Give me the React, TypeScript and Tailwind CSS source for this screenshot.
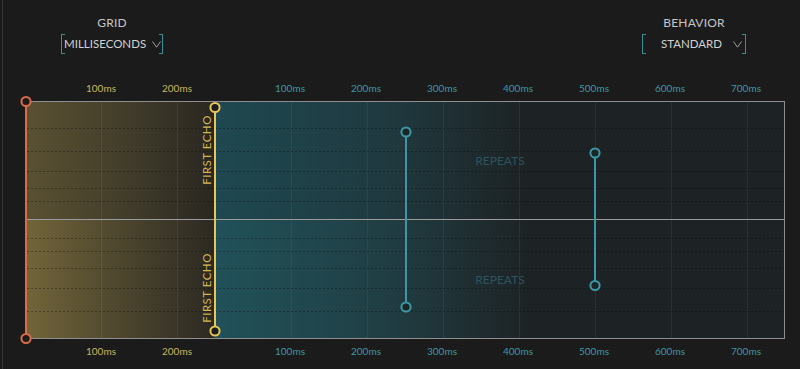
import React from "react";

const YELLOW_TICKS = ["100ms", "200ms"];
const TEAL_TICKS = ["100ms", "200ms", "300ms", "400ms", "500ms", "600ms", "700ms"];

// svg coords: origin at the plot's outer top-left corner
const GRID_YELLOW = [76.5, 152.5];
const GRID_TEAL = [266.5, 342.5, 418.5, 494.5, 570.5, 646.5, 722.5];
const DOTTED = [27.5, 50.5, 70.5, 87.5, 100.5, 137.5, 150.5, 167.5, 187.5, 210.5];

const REPEATS = [
    { x: 381, top: 31, bottom: 206 },
    { x: 570, top: 52, bottom: 184.5 },
];

function Chevron() {
    return (
        <svg width="9" height="7" viewBox="0 0 9 7" className="shrink-0">
            <polyline points="0.5,0.5 4.5,6.2 8.5,0.5" fill="none" stroke="#9d9d9d" strokeWidth="1" />
        </svg>
    );
}

function Dropdown({ label, value, boxClass }: { label: string; value: string; boxClass: string }) {
    return (
        <div className="flex flex-col items-center">
            <div className="text-[12px] leading-[16px] text-[#c6c6c6] tracking-[0.2px]">{label}</div>
            <div className={`relative mt-[3px] h-[20px] flex items-center border-x border-[#3b8d9a] ${boxClass}`}>
                <span className="absolute -left-px top-0 w-[4px] h-px bg-[#3b8d9a]" />
                <span className="absolute -left-px bottom-0 w-[4px] h-px bg-[#3b8d9a]" />
                <span className="absolute -right-px top-0 w-[4px] h-px bg-[#3b8d9a]" />
                <span className="absolute -right-px bottom-0 w-[4px] h-px bg-[#3b8d9a]" />
                <span className="text-[11.5px] leading-[16px] text-[#d2d2d2] whitespace-nowrap">{value}</span>
                <Chevron />
            </div>
        </div>
    );
}

function TickRow({ className }: { className: string }) {
    return (
        <div className={`flex h-[12px] text-[10px] leading-[12px] ${className}`}>
            <div className="w-[60px] shrink-0" />
            {YELLOW_TICKS.map((t) => (
                <div key={"y" + t} className="w-[76px] shrink-0 text-center text-[#cdb35a]">{t}</div>
            ))}
            <div className="w-[37px] shrink-0" />
            {TEAL_TICKS.map((t) => (
                <div key={"t" + t} className="w-[76px] shrink-0 text-center text-[#3f97a6]">{t}</div>
            ))}
        </div>
    );
}

function Marker({ x, y, color, fill }: { x: number; y: number; color: string; fill: string }) {
    return <circle cx={x} cy={y} r={4.6} fill={fill} stroke={color} strokeWidth={2} />;
}

function Plot() {
    return (
        <div className="relative ml-[22px] mt-[7px] w-[760px] h-[238px] flex flex-col border-l-2 border-l-[#de6b47] border-y border-r border-y-[#8e8e8e] border-r-[#8e8e8e]">
            <div className="flex h-[118px] border-b border-[#9b9b9b]">
                <div className="w-[188px] bg-linear-to-r from-[#5a5132] via-[#433e2b] to-[#2a2721]" />
                <div className="flex-1 bg-linear-to-r from-[#1f4850] via-[#1f3a40] via-30% to-[#1d2224] to-55%" />
            </div>
            <div className="flex flex-1">
                <div className="w-[188px] bg-linear-to-r from-[#72653a] via-[#4d462e] to-[#2c2922]" />
                <div className="flex-1 bg-linear-to-r from-[#215159] via-[#203e44] via-30% to-[#1d2325] to-55%" />
            </div>

            <svg
                width="760"
                height="238"
                className="absolute -left-[2px] -top-px overflow-visible pointer-events-none"
            >
                {GRID_YELLOW.map((x) => (
                    <line key={x} x1={x} x2={x} y1={1} y2={237} stroke="rgba(255,236,170,0.07)" />
                ))}
                {GRID_TEAL.map((x) => (
                    <line key={x} x1={x} x2={x} y1={1} y2={237} stroke="rgba(70,165,180,0.13)" />
                ))}
                {DOTTED.map((y) => (
                    <line key={y} x1={2} x2={759} y1={y} y2={y} stroke="rgba(0,0,0,0.3)" strokeDasharray="2 2" />
                ))}

                <line x1={190} x2={190} y1={6.5} y2={230} stroke="#e6c55b" strokeWidth={2} />
                <Marker x={190} y={6.5} color="#e6c55b" fill="#1c1c1c" />
                <Marker x={190} y={230} color="#e6c55b" fill="#1c1c1c" />

                {REPEATS.map((r) => (
                    <g key={r.x}>
                        <line x1={r.x} x2={r.x} y1={r.top} y2={r.bottom} stroke="#3e97a5" strokeWidth={2} />
                        <Marker x={r.x} y={r.top} color="#3e97a5" fill="#1b2629" />
                        <Marker x={r.x} y={r.bottom} color="#3e97a5" fill="#1b2629" />
                    </g>
                ))}

                <Marker x={1} y={0.5} color="#de6b47" fill="#1c1c1c" />
                <Marker x={1} y={237.5} color="#de6b47" fill="#1c1c1c" />
            </svg>

            <span className="absolute left-[180px] top-[48px] -translate-x-1/2 -translate-y-1/2 -rotate-90 whitespace-nowrap text-[11.5px] leading-[12px] tracking-[0.5px] text-[#d6b655]">
                FIRST ECHO
            </span>
            <span className="absolute left-[180px] top-[186px] -translate-x-1/2 -translate-y-1/2 -rotate-90 whitespace-nowrap text-[11.5px] leading-[12px] tracking-[0.5px] text-[#d6b655]">
                FIRST ECHO
            </span>
            <span className="absolute left-[473px] top-[59px] -translate-x-1/2 -translate-y-1/2 whitespace-nowrap text-[12px] leading-[14px] text-[#2b545c]">
                REPEATS
            </span>
            <span className="absolute left-[473px] top-[178px] -translate-x-1/2 -translate-y-1/2 whitespace-nowrap text-[12px] leading-[14px] text-[#2b545c]">
                REPEATS
            </span>
        </div>
    );
}

export default function App() {
    return (
        <div className="w-[800px] h-[369px] overflow-hidden bg-[#1b1b1b] pl-[2px] font-['Lato','Noto_Sans',sans-serif]">
            <div className="h-full flex flex-col border-l border-[#383838]">
                <div className="flex justify-between pl-[58px] pr-[54px] pt-[15px]">
                    <Dropdown label="GRID" value="MILLISECONDS" boxClass="w-[102px] pl-[2px] gap-[6px]" />
                    <Dropdown label="BEHAVIOR" value="STANDARD" boxClass="w-[104px] justify-end pr-[3px] gap-[11px]" />
                </div>
                <TickRow className="mt-[28px]" />
                <Plot />
                <TickRow className="mt-[6px]" />
            </div>
        </div>
    );
}
